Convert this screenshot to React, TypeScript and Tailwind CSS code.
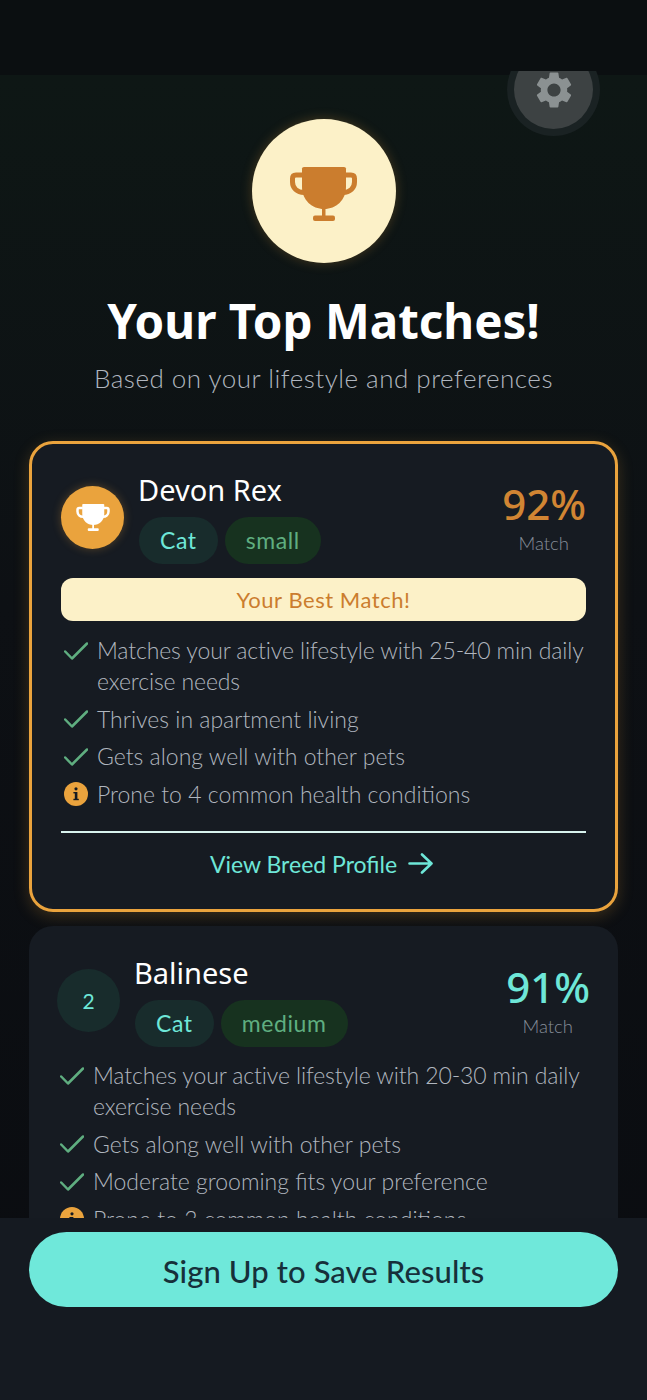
import { MdSettings } from "react-icons/md";

const heading = "font-['Noto_Sans',sans-serif]";
const body = "font-['Lato',sans-serif]";

function Trophy({ className }: { className: string }) {
  return (
    <svg viewBox="0 0 67 54" className={className} fill="currentColor">
      <path d="M12 1.500Q12 0 14 0H54Q56 0 56 1.500V20C56 33 46 42 34 42C22 42 12 33 12 20Z" />
      <path
        d="M13 8H6Q2.500 8 2.500 11.500V15C2.500 21 7 25.500 14 25.500M55 8H61Q64.500 8 64.500 11.500V15C64.500 21 60 25.500 53 25.500"
        fill="none"
        stroke="currentColor"
        strokeWidth="5"
      />
      <rect x="32" y="40" width="3.500" height="10" />
      <rect x="23" y="48.500" width="22" height="5.500" rx="2" />
    </svg>
  );
}

function CheckIcon() {
  return (
    <svg viewBox="0 0 24 18" className="ml-[3px] w-[24px] h-[18px]" fill="none">
      <path d="M1.200 9.500L8 16.500L23 1.500" stroke="#5fae80" strokeWidth="2.500" strokeLinecap="round" strokeLinejoin="round" />
    </svg>
  );
}

function InfoIcon() {
  return (
    <svg viewBox="0 0 24 24" className="ml-[3px] w-[24px] h-[24px]">
      <circle cx="12" cy="12" r="12" fill="#eaa33d" />
      <circle cx="12" cy="6.800" r="1.600" fill="#151a21" />
      <rect x="10.800" y="10" width="2.600" height="8" fill="#151a21" />
      <rect x="9.400" y="10" width="2.600" height="1.400" fill="#151a21" />
      <rect x="9.400" y="16.800" width="5.400" height="1.400" fill="#151a21" />
    </svg>
  );
}

function Reason({ text, warn, long }: { text: string; warn?: boolean; long?: boolean }) {
  return (
    <li className="flex gap-[8px] items-start">
      <span className="w-[28px] h-[31px] shrink-0 flex items-center">{warn ? <InfoIcon /> : <CheckIcon />}</span>
      <span className={`text-[23px] leading-[31px] text-[#b0b6bf] font-light ${long ? "tracking-[-0.12px]" : ""}`}>{text}</span>
    </li>
  );
}

function Pill({ label, green }: { label: string; green?: boolean }) {
  return (
    <span
      className={`h-[47px] px-[21px] rounded-full flex items-center text-[23px] tracking-[0.6px] ${
        green ? "bg-[#17321f] text-[#5fae80]" : "bg-[#182c2c] text-[#6ee7d8]"
      }`}
    >
      {label}
    </span>
  );
}

function Score({ value, color }: { value: string; color: string }) {
  return (
    <div className="flex flex-col items-end">
      <div className={`text-[42px] leading-[48px] font-medium ${color} ${heading}`}>{value}</div>
      <div className="mt-[3px] mr-[17px] text-[18.500px] leading-[24px] text-[#868e99] font-light">Match</div>
    </div>
  );
}

export default function App() {
  return (
    <div className={`relative h-[1400px] overflow-hidden bg-[#0a0c10] ${body}`}>
      <div className="h-[75px] bg-[#0b0f11]" />
      <div className="absolute top-[71px] right-[47px] w-[93px] h-[65px] overflow-hidden">
        <div className="-mt-[28px] w-[93px] h-[93px] rounded-full bg-[#1a2223] flex items-center justify-center">
          <div className="w-[79px] h-[79px] rounded-full bg-[#3d4243] flex items-center justify-center">
            <MdSettings className="text-[44px] text-[#8b9192]" />
          </div>
        </div>
      </div>

      <main className="bg-gradient-to-b from-[#0e1715] via-[#0d1014] via-40% to-[#0a0c10] px-[29px] pt-[44px] h-[1325px]">
        <div className="flex flex-col items-center">
          <div className="w-[144px] h-[144px] rounded-full bg-[#fcf1c8] text-[#cb7d2e] flex items-center justify-center shadow-[0_0_12px_rgba(234,163,61,0.25)]">
            <Trophy className="mt-[5px] w-[67px] h-[54px]" />
          </div>
          <h1 className={`mt-[27px] text-[47.500px] leading-[62px] font-bold text-white ${heading}`}>Your Top Matches!</h1>
          <p className="mt-[9px] text-[26px] tracking-[0.5px] leading-[34px] font-light text-[#b0b6bf]">Based on your lifestyle and preferences</p>
        </div>

        <section className="mt-[46px] h-[471px] rounded-[24px] border-[3px] border-[#eaa33d] bg-[#161b22] px-[29px] pt-[27px] shadow-[0_4px_16px_rgba(234,163,61,0.22)]">
          <div className="flex items-center">
            <div className="w-[63px] h-[63px] rounded-full bg-[#eaa33d] text-white flex items-center justify-center shadow-[0_0_10px_rgba(234,163,61,0.3)]">
              <Trophy className="w-[34px] h-[27px]" />
            </div>
            <div className="ml-[15px] flex-1">
              <div className={`-ml-px text-[29px] leading-[38px] text-white ${heading}`}>Devon Rex</div>
              <div className="flex gap-[7px] mt-[8px]">
                <Pill label="Cat" />
                <Pill label="small" green />
              </div>
            </div>
            <Score value="92%" color="text-[#d18533]" />
          </div>
          <div className="mt-[14px] h-[43px] rounded-[12px] bg-[#fcf1c8] flex items-center justify-center text-[22px] tracking-[0.55px] text-[#cb7d2e]">
            Your Best Match!
          </div>
          <ul className="mt-[14px] flex flex-col gap-[6.500px]">
            <Reason text="Matches your active lifestyle with 25-40 min daily exercise needs" long />
            <Reason text="Thrives in apartment living" />
            <Reason text="Gets along well with other pets" />
            <Reason text="Prone to 4 common health conditions" warn />
          </ul>
          <div className="mt-[21px] h-[2px] bg-[#d8f3ee]" />
          <div className="mt-[14px] pr-[4px] flex items-center justify-center gap-[11px] text-[23px] text-[#6ee7d8]">
            View Breed Profile
            <svg viewBox="0 0 25 21" className="w-[25px] h-[21px]" fill="none" stroke="currentColor" strokeWidth="2.600" strokeLinecap="round" strokeLinejoin="round">
              <path d="M1.500 10.500H23.500M14 1.500L23.500 10.500L14 19.500" />
            </svg>
          </div>
        </section>

        <section className="mt-[14px] h-[400px] rounded-[24px] bg-[#161b22] px-[28px] pt-[28px]">
          <div className="flex items-center">
            <div className="w-[63px] h-[63px] rounded-full bg-[#182c2c] text-[#6ee7d8] text-[21px] flex items-center justify-center">2</div>
            <div className="ml-[15px] flex-1">
              <div className={`-ml-px text-[29px] leading-[38px] text-white ${heading}`}>Balinese</div>
              <div className="flex gap-[7px] mt-[8px]">
                <Pill label="Cat" />
                <Pill label="medium" green />
              </div>
            </div>
            <Score value="91%" color="text-[#6ee7d8]" />
          </div>
          <ul className="mt-[13px] flex flex-col gap-[6.500px]">
            <Reason text="Matches your active lifestyle with 20-30 min daily exercise needs" long />
            <Reason text="Gets along well with other pets" />
            <Reason text="Moderate grooming fits your preference" />
            <Reason text="Prone to 3 common health conditions" warn />
          </ul>
        </section>
      </main>

      <footer className="absolute inset-x-0 bottom-0 h-[182px] bg-[#151a21] px-[29px] pt-[14px]">
        <button className="w-full h-[75px] pt-[3px] rounded-full bg-[#6fe8da] text-[#16303a] text-[31px] tracking-[0.1px] font-medium">
          Sign Up to Save Results
        </button>
      </footer>
    </div>
  );
}
